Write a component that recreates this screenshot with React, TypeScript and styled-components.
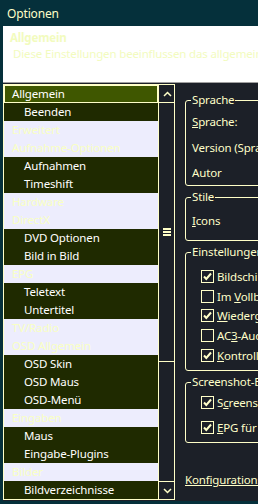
import React from 'react';
import styled, { createGlobalStyle } from 'styled-components';

/* -------------------------- colours -------------------------- */
const FRAME = '#05303b';
const PANEL = '#1c2028';
const CREAM = '#ffffc8';
const OLIVE = '#3f5700';
const SUB_BG = '#1f2a00';
const CAT_BG = '#ededfd';
const CAT_TEXT = '#f9ffc4';

/* -------------------------- styles -------------------------- */
const Global = createGlobalStyle`
  html, body { margin: 0; padding: 0; background: ${FRAME}; }
  body {
    font-family: 'Noto Sans', 'Liberation Sans', sans-serif;
    font-size: 11.5px; letter-spacing: -0.15px;
  }
`;

const Window = styled.div`
  width: 258px; height: 504px; overflow: hidden;
  background: ${FRAME}; display: flex; flex-direction: column;
`;
const TitleBar = styled.div`
  height: 26px; flex: none; display: flex; align-items: center;
  padding-left: 7px; color: ${CREAM}; font-size: 12px;
`;
const Client = styled.div`
  margin-left: 3px; height: 475px; width: 340px;
  background: ${PANEL}; display: flex; flex-direction: column;
`;
const Header = styled.div`
  height: 57px; flex: none; background: #fff; border-bottom: 1px solid #a0a0a0;
  padding: 4px 0 0 7px; box-sizing: border-box; color: #f2fbbe;
`;
const HeaderTitle = styled.div` font-weight: 700; line-height: 16px; `;
const HeaderText = styled.div` line-height: 16px; padding-left: 3px; white-space: nowrap; `;

const Body = styled.div` flex: 1; display: flex; padding-top: 1px; `;

const ListBox = styled.div`
  width: 172px; height: 416px; box-sizing: border-box; flex: none;
  border: 1px solid ${CREAM}; display: flex;
`;
const Items = styled.div` width: 154px; flex: none; `;
const Item = styled.div<{ $kind: 'cat' | 'sub' | 'sel' }>`
  height: 18px; white-space: nowrap; overflow: hidden; box-sizing: border-box;
  background: ${p => (p.$kind === 'cat' ? CAT_BG : p.$kind === 'sel' ? OLIVE : SUB_BG)};
  color: ${p => (p.$kind === 'cat' ? CAT_TEXT : '#ffffff')};
  border: ${p => (p.$kind === 'sel' ? `1px solid ${CREAM}` : 'none')};
  line-height: ${p => (p.$kind === 'sel' ? 16 : 18)}px;
  padding-left: ${p => (p.$kind === 'sub' ? 20 : p.$kind === 'sel' ? 7 : 8)}px;
`;
const ScrollBar = styled.div`
  width: 16px; flex: none; border-left: 1px solid ${CREAM};
  display: flex; flex-direction: column;
`;
const ArrowBtn = styled.div<{ $down?: boolean }>`
  height: 17px; flex: none; display: flex; align-items: center; justify-content: center;
  ${p => (p.$down ? `border-top: 1px solid ${CREAM};` : `border-bottom: 1px solid ${CREAM};`)}
`;
const Thumb = styled.div`
  height: 258px; flex: none; border-bottom: 1px solid ${CREAM};
  display: flex; align-items: center; justify-content: center;
`;
const Track = styled.div` flex: 1; `;

const Right = styled.div`
  flex: 1; padding: 8px 0 0 10px; color: ${CREAM};
  display: flex; flex-direction: column;
`;
const Group = styled.fieldset<{ $pt: number; $pb: number }>`
  margin: 0 0 3px; padding: ${p => p.$pt}px 0 ${p => p.$pb}px; min-width: 0;
  border: 1px solid ${CREAM}; border-radius: 3px;
`;
const Legend = styled.legend`
  margin-left: 5px; padding: 0 1px; line-height: 16px; white-space: nowrap;
`;
const Label = styled.div<{ $h: number }>`
  height: ${p => p.$h}px; display: flex; align-items: center;
  padding-left: 6px; white-space: nowrap;
`;
const CheckRow = styled.div<{ $h: number }>`
  height: ${p => p.$h}px; display: flex; align-items: center; gap: 3px;
  padding-left: 15px; white-space: nowrap;
`;
const Link = styled.div`
  margin-top: 26px; text-decoration: underline; white-space: nowrap; line-height: 16px;
`;

/* ----------------------- helpers ----------------------- */
const Chevron: React.FC<{ down?: boolean }> = ({ down }) => (
  <svg width="9" height="6" viewBox="0 0 9 6">
    <polyline
      points={down ? '1,1 4.5,4.5 8,1' : '1,5 4.5,1.5 8,5'}
      fill="none" stroke={CREAM} strokeWidth="1.5"
    />
  </svg>
);

const Grip = () => (
  <svg width="8" height="8" viewBox="0 0 8 8">
    <rect x="0" y="0" width="8" height="2" fill={CREAM} />
    <rect x="0" y="3" width="8" height="2" fill={CREAM} />
    <rect x="0" y="6" width="8" height="2" fill={CREAM} />
  </svg>
);

const Check: React.FC<{ on?: boolean }> = ({ on }) => (
  <svg width="13" height="13" viewBox="0 0 13 13" style={{ flex: 'none' }}>
    <rect x="0.5" y="0.5" width="12" height="12" fill={PANEL} stroke={CREAM} />
    {on && <polyline points="3,6.5 5.3,9 10,3.5" fill="none" stroke={CREAM} strokeWidth="2" />}
  </svg>
);

type Kind = 'cat' | 'sub' | 'sel';
const tree: [string, Kind][] = [
  ['Allgemein', 'sel'], ['Beenden', 'sub'], ['Erweitert', 'cat'], ['Aufnahme-Optionen', 'cat'],
  ['Aufnahmen', 'sub'], ['Timeshift', 'sub'], ['Hardware', 'cat'], ['DirectX', 'cat'],
  ['DVD Optionen', 'sub'], ['Bild in Bild', 'sub'], ['EPG', 'cat'], ['Teletext', 'sub'],
  ['Untertitel', 'sub'], ['TV/Radio', 'cat'], ['OSD Allgemein', 'cat'], ['OSD Skin', 'sub'],
  ['OSD Maus', 'sub'], ['OSD-Menü', 'sub'], ['Eingaben', 'cat'], ['Maus', 'sub'],
  ['Eingabe-Plugins', 'sub'], ['Bilder', 'cat'], ['Bildverzeichnisse', 'sub'],
];

/* ------------------------- component ------------------------ */
const App: React.FC = () => (
  <Window>
    <Global />
    <TitleBar>Optionen</TitleBar>
    <Client>
      <Header>
        <HeaderTitle>Allgemein</HeaderTitle>
        <HeaderText>Diese Einstellungen beeinflussen das allgemeine Verhalten</HeaderText>
      </Header>
      <Body>
        <ListBox>
          <Items>
            {tree.map(([name, kind]) => (
              <Item key={name} $kind={kind}>{name}</Item>
            ))}
          </Items>
          <ScrollBar>
            <ArrowBtn><Chevron /></ArrowBtn>
            <Thumb><Grip /></Thumb>
            <Track />
            <ArrowBtn $down><Chevron down /></ArrowBtn>
          </ScrollBar>
        </ListBox>

        <Right>
          <Group $pt={0} $pb={0}>
            <Legend>Sprache</Legend>
            <Label $h={26}><span><u>S</u>prache:</span></Label>
            <Label $h={26}>Version (Sprachdatei):</Label>
            <Label $h={25}>Autor</Label>
          </Group>
          <Group $pt={2} $pb={7}>
            <Legend>Stile</Legend>
            <Label $h={26}><span><u>I</u>cons</span></Label>
          </Group>
          <Group $pt={6} $pb={5}>
            <Legend>Einstellungen</Legend>
            <CheckRow $h={20}><Check on /><span>Bildschirmschoner deaktivieren</span></CheckRow>
            <CheckRow $h={20}><Check /><span>Im <u>V</u>ollbildmodus starten</span></CheckRow>
            <CheckRow $h={19}><Check on /><span><u>W</u>iedergabe fortsetzen</span></CheckRow>
            <CheckRow $h={20}><Check /><span>AC<u>3</u>-Audio</span></CheckRow>
            <CheckRow $h={20}><Check on /><span><u>K</u>ontrollleiste</span></CheckRow>
          </Group>
          <Group $pt={0} $pb={2}>
            <Legend>Screenshot-Einstellungen</Legend>
            <CheckRow $h={25}><Check on /><span>S<u>c</u>reenshots</span></CheckRow>
            <CheckRow $h={25}><Check on /><span><u>E</u>PG für Screenshots</span></CheckRow>
          </Group>
          <Link>Konfigurationsordner öffnen</Link>
        </Right>
      </Body>
    </Client>
  </Window>
);

export default App;
